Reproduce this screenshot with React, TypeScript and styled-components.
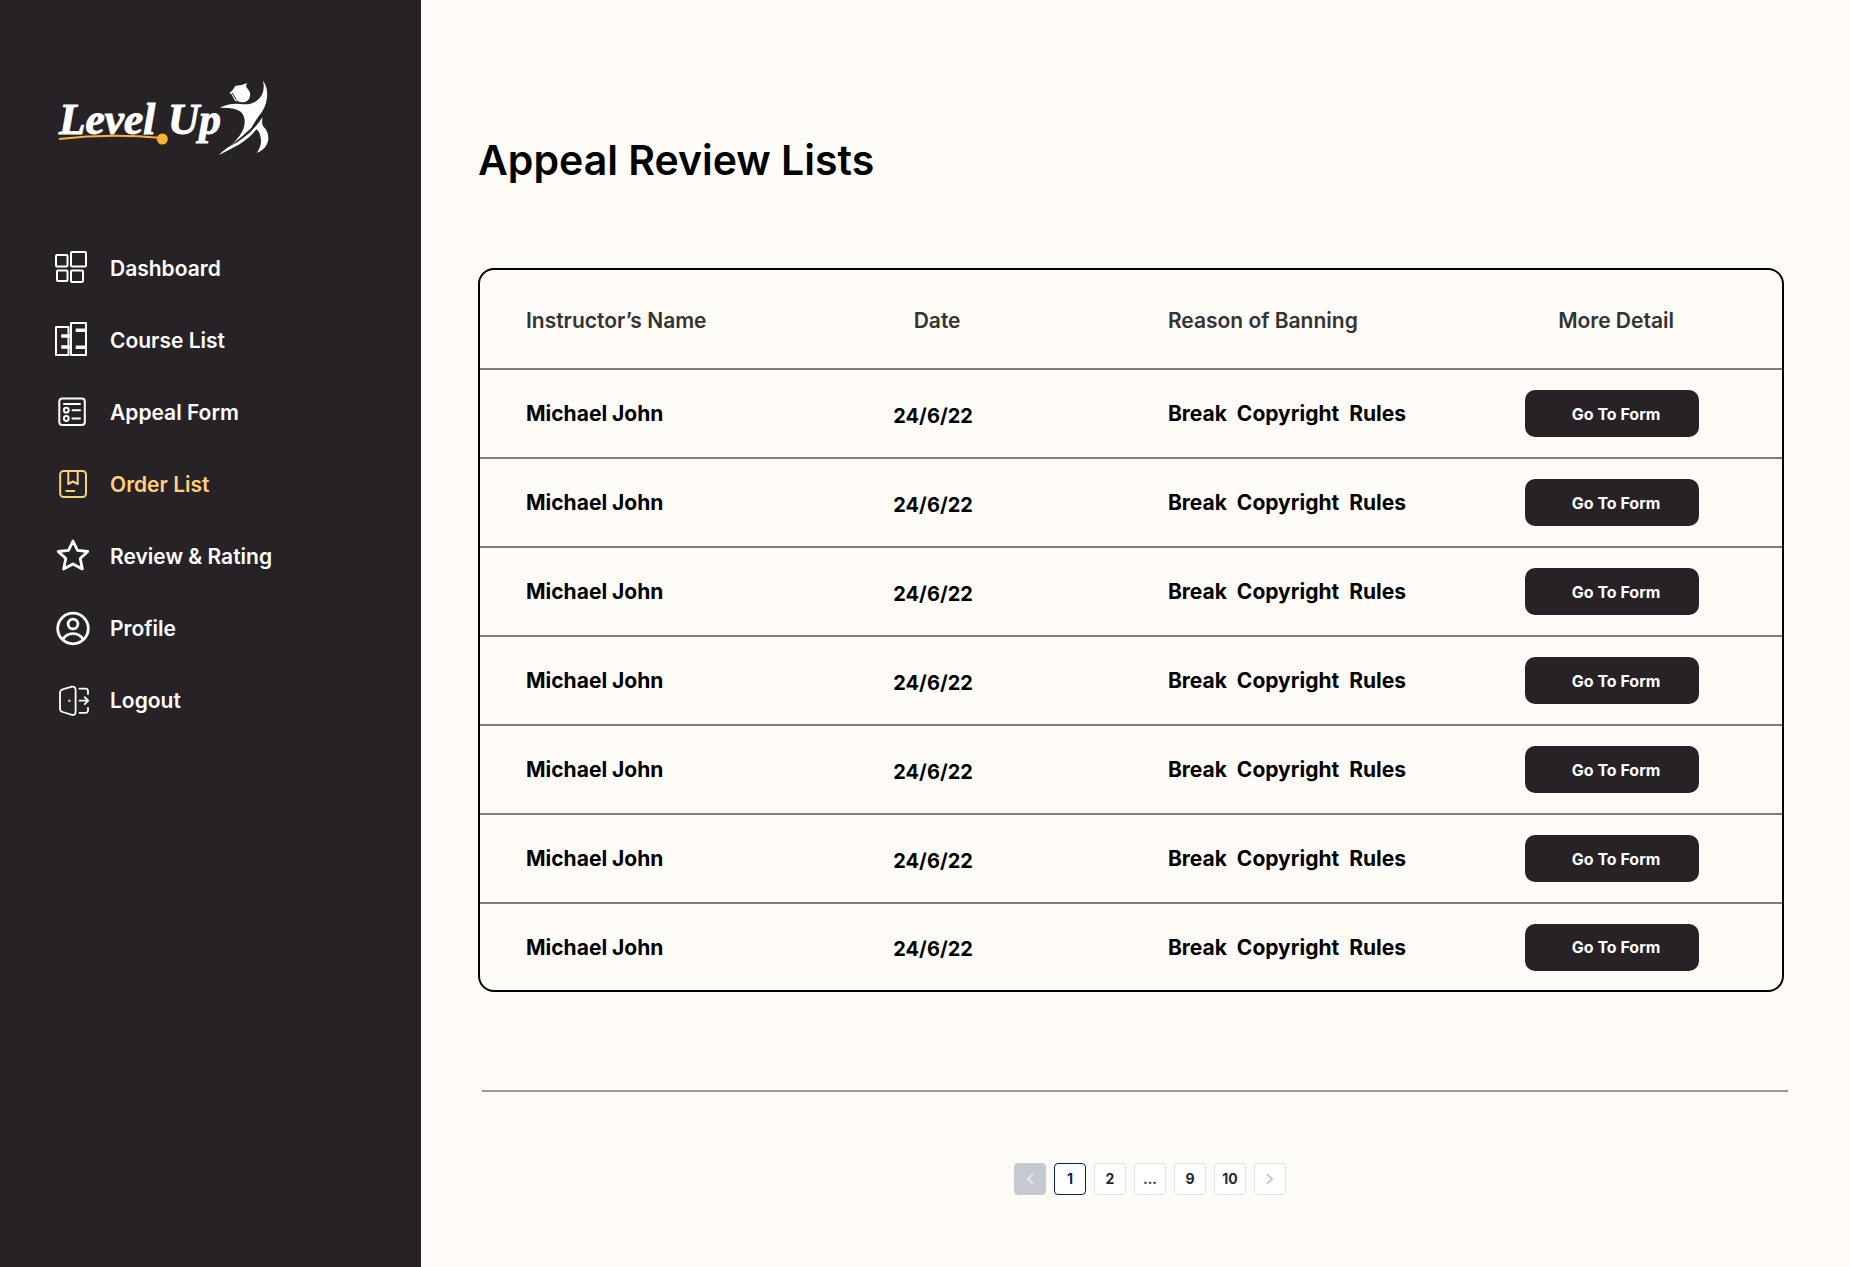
import React from "react";
import styled, { createGlobalStyle } from "styled-components";

const GlobalStyle = createGlobalStyle`
  *, *::before, *::after { box-sizing: border-box; }
  body {
    margin: 0;
    background: #fffbf6;
    color: #000;
    font-family: Inter, "Open Sans", sans-serif;
  }
`;

const Layout = styled.div`
  display: flex;
  min-height: 100vh;
`;

const Sidebar = styled.aside`
  flex: 0 0 421px;
  padding: 77px 55px 40px;
  background: #262226;
`;

const HomeLink = styled.a`
  display: block;
  width: 216px;
  height: 81px;
`;

const NavList = styled.ul`
  display: flex;
  flex-direction: column;
  gap: 36px;
  margin: 92px 0 0;
  padding: 0;
  list-style: none;
`;

const NavLink = styled.a<{ $active?: boolean }>`
  display: flex;
  align-items: center;
  gap: 19px;
  height: 36px;
  color: ${(p) => (p.$active ? "#ffcf7d" : "#fff")};
  font-size: 21px;
  font-weight: 600;
  text-decoration: none;
  white-space: nowrap;
`;

const IconSvg = styled.svg`
  flex: none;
  width: 36px;
  height: 36px;
  fill: none;
  stroke: currentColor;
  stroke-width: 2;
  stroke-linecap: round;
  stroke-linejoin: round;
`;

const Main = styled.main`
  flex: 1;
  min-width: 0;
  padding: 130px 66px 72px 57px;
`;

const Title = styled.h1`
  margin: 0;
  font-size: 41px;
  line-height: 60px;
  font-weight: 600;
`;

const Panel = styled.div`
  margin-top: 78px;
  border: 2px solid #000;
  border-radius: 16px;
  overflow: hidden;
`;

const Table = styled.table`
  width: 100%;
  table-layout: fixed;
  border-collapse: separate;
  border-spacing: 0;
`;

const Col = styled.col<{ $share: string }>`
  width: ${(p) => p.$share};
`;

const HeadCell = styled.th<{ $center?: boolean }>`
  height: 100px;
  padding: 2px 0 0 ${(p) => (p.$center ? "8px" : "46px")};
  border-bottom: 2px solid #7f7d7b;
  color: #333;
  font-size: 21px;
  font-weight: 600;
  text-align: ${(p) => (p.$center ? "center" : "left")};
  white-space: nowrap;
`;

const Cell = styled.td<{ $center?: boolean }>`
  height: 89px;
  padding: 0 0 0 ${(p) => (p.$center ? "0" : "46px")};
  border-bottom: 2px solid #7f7d7b;
  font-size: 21px;
  font-weight: 700;
  text-align: ${(p) => (p.$center ? "center" : "left")};
  white-space: pre;

  tr:last-child > & {
    height: 86px;
    border-bottom: 0;
  }
`;

const DateCell = styled(Cell)`
  padding-top: 4px;
  font-size: 20px;
`;

const FormButton = styled.button`
  width: 174px;
  height: 47px;
  padding: 0 0 0 8px;
  border: 0;
  border-radius: 10px;
  background: #262226;
  color: #fff;
  font: 700 16px/24px Inter, "Open Sans", sans-serif;
  vertical-align: middle;
  cursor: pointer;
`;

const Footer = styled.footer`
  margin: 98px -4px 0 4px;
  border-top: 2px solid #9d9a96;
`;

const Pagination = styled.nav`
  display: flex;
  justify-content: center;
  gap: 8px;
  padding: 71px 0 0 30px;
`;

const PageButton = styled.button<{ $current?: boolean }>`
  display: flex;
  align-items: center;
  justify-content: center;
  width: 32px;
  height: 32px;
  padding: 0;
  border: 1px solid ${(p) => (p.$current ? "#001f6b" : "#dfe3e8")};
  border-radius: 4px;
  background: #fff;
  color: ${(p) => (p.$current ? "#001f6b" : "#212b36")};
  font: 700 14px/20px Inter, "Open Sans", sans-serif;
  cursor: pointer;

  &:disabled {
    border-color: #c4cacf;
    background: #c4cacf;
    cursor: default;
  }
`;

const Chevron = styled.svg<{ $tone: string }>`
  width: 10px;
  height: 14px;
  fill: none;
  stroke: ${(p) => p.$tone};
  stroke-width: 2;
`;

const Logo = () => (
  <svg width="216" height="81" viewBox="45 51 648 243" role="img" aria-label="Level Up">
    <g
      fill="#fff"
      stroke="#fff"
      strokeWidth="3"
      fontFamily="'Liberation Serif', serif"
      fontSize="130"
      fontWeight="700"
      fontStyle="italic"
    >
      <text x="57" y="223">Level</text>
      <text x="384" y="223">Up</text>
    </g>
    <path d="M57 237Q210 219 367 234" fill="none" stroke="#f9b233" strokeWidth="6" />
    <circle cx="367" cy="237" r="16.500" fill="#f9b233" />
    <g fill="#fff">
      <path d="M568 100Q580 90 586 77Q602 78 622 69Q616 76 619 82Q633 95 630 109Q626 127 607 127Q596 127 589 119L592 125L584 121L574 102Z" />
      <path d="M576 99L589 119" fill="none" stroke="#262226" strokeWidth="3" />
      <path d="M539 143Q568 129 601 132Q634 136 650 122Q678 101 669 62Q684 82 681 113Q678 143 655 170Q642 189 633 205Q608 230 573 255Q603 229 611 204Q620 174 603 156Q588 142 539 143Z" />
      <path d="M668 171Q664 187 669 198Q689 218 684 244Q678 269 650 279Q664 259 663 241Q661 215 649 208Q632 232 596 254Q572 267 537 285Q556 263 589 248Q638 218 668 171Z" />
    </g>
  </svg>
);

const icons: Record<string, React.ReactNode> = {
  dashboard: (
    <>
      <rect x="1" y="5" width="11.500" height="11.500" rx="1" />
      <rect x="16" y="2" width="15" height="14.500" rx="1" />
      <rect x="2" y="20.500" width="10.500" height="10.500" rx="1" />
      <rect x="16" y="20.500" width="12" height="11.500" rx="1" />
    </>
  ),
  course: (
    <>
      <rect x="1" y="5" width="12.500" height="28" />
      <rect x="16" y="1" width="15" height="32" />
      <path d="M8 14H13M8 25H13M22.500 8.200H30M22.500 25.200H30" strokeWidth="3.600" strokeLinecap="square" />
    </>
  ),
  appeal: (
    <>
      <rect x="4.300" y="4.500" width="25.500" height="26.500" rx="3" />
      <path d="M9 10H25M17.500 16.200H25M17.500 24.500H25" />
      <circle cx="11.300" cy="16.200" r="2.400" />
      <circle cx="11.300" cy="24.500" r="2.400" />
    </>
  ),
  order: (
    <>
      <rect x="5.200" y="5" width="25.800" height="26" rx="3.500" />
      <path d="M13.300 5V18L18 15.500L22.700 18V5M11.300 25H19.300" />
    </>
  ),
  review: (
    <path
      d="M18 3L22.500 12.300L32.800 13.500L25.200 20.600L27.400 31L18 26L8.600 31L10.800 20.600L3.200 13.500L13.500 12.300Z"
      strokeWidth="2.800"
    />
  ),
  profile: (
    <g strokeWidth="2.800">
      <circle cx="18" cy="18.500" r="15.300" />
      <circle cx="18" cy="14" r="4.900" />
      <path d="M7.800 29.500C10 25.500 13.600 23.600 18 23.600S26 25.500 28.200 29.500" />
    </g>
  ),
  logout: (
    <g strokeWidth="1.800">
      <path d="M5 11Q5 8.200 7.600 7.300L17 4.700Q20.600 4.300 20.600 8V29.500Q20.600 33.500 17 32.900L7.600 30Q5 29.200 5 26.500Z" />
      <path d="M24.500 6.700H30.500Q33 6.700 33 9.500V12M24.500 30.800H30.500Q33 30.800 33 28V25.800M24.500 18.700H33M29.700 15.200L33.200 18.700L29.700 22.200" />
      <circle cx="14.400" cy="18.700" r="0.400" />
    </g>
  ),
};

const navItems = [
  { icon: "dashboard", label: "Dashboard" },
  { icon: "course", label: "Course List" },
  { icon: "appeal", label: "Appeal Form" },
  { icon: "order", label: "Order List", active: true },
  { icon: "review", label: "Review & Rating" },
  { icon: "profile", label: "Profile" },
  { icon: "logout", label: "Logout" },
];

const appeals = Array.from({ length: 7 }, (_, id) => ({
  id,
  name: "Michael John",
  date: "24/6/22",
  reason: "Break  Copyright  Rules",
}));

const pages = ["1", "2", "...", "9", "10"];

export default function App() {
  return (
    <>
      <GlobalStyle />
      <Layout>
        <Sidebar>
          <HomeLink href="#home">
            <Logo />
          </HomeLink>
          <nav aria-label="Main">
            <NavList>
              {navItems.map((item) => (
                <li key={item.icon}>
                  <NavLink
                    href={`#${item.icon}`}
                    $active={item.active}
                    aria-current={item.active ? "page" : undefined}
                  >
                    <IconSvg viewBox="0 0 36 36" aria-hidden="true">
                      {icons[item.icon]}
                    </IconSvg>
                    {item.label}
                  </NavLink>
                </li>
              ))}
            </NavList>
          </nav>
        </Sidebar>
        <Main>
          <Title>Appeal Review Lists</Title>
          <Panel>
            <Table>
              <colgroup>
                <Col $share="20.3%" />
                <Col $share="29%" />
                <Col $share="24.6%" />
                <Col $share="26.1%" />
              </colgroup>
              <thead>
                <tr>
                  <HeadCell scope="col">Instructor’s Name</HeadCell>
                  <HeadCell scope="col" $center>Date</HeadCell>
                  <HeadCell scope="col">Reason of Banning</HeadCell>
                  <HeadCell scope="col" $center>More Detail</HeadCell>
                </tr>
              </thead>
              <tbody>
                {appeals.map((appeal) => (
                  <tr key={appeal.id}>
                    <Cell>{appeal.name}</Cell>
                    <DateCell $center>{appeal.date}</DateCell>
                    <Cell>{appeal.reason}</Cell>
                    <Cell $center>
                      <FormButton type="button">Go To Form</FormButton>
                    </Cell>
                  </tr>
                ))}
              </tbody>
            </Table>
          </Panel>
          <Footer>
            <Pagination aria-label="Pagination">
              <PageButton type="button" disabled aria-label="Previous page">
                <Chevron $tone="#e3e7ea" viewBox="0 0 10 14" aria-hidden="true">
                  <path d="M8 2L3 7L8 12" />
                </Chevron>
              </PageButton>
              {pages.map((page) => (
                <PageButton
                  key={page}
                  type="button"
                  $current={page === "1"}
                  aria-current={page === "1" ? "page" : undefined}
                >
                  {page}
                </PageButton>
              ))}
              <PageButton type="button" aria-label="Next page">
                <Chevron $tone="#c4cdd5" viewBox="0 0 10 14" aria-hidden="true">
                  <path d="M2 2L7 7L2 12" />
                </Chevron>
              </PageButton>
            </Pagination>
          </Footer>
        </Main>
      </Layout>
    </>
  );
}
